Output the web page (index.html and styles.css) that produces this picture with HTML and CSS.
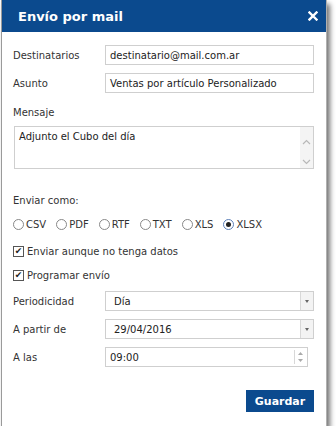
FILE: index.html
```html
<!DOCTYPE html>
<html>
<head>
  <meta charset="utf-8">
  <title>Envío por mail</title>
  <link rel="stylesheet" href="styles.css">
</head>
<body>
  <div class="dialog">
    <div class="header">
      <h2>Envío por mail</h2>
      <svg class="close" width="10" height="10" viewBox="0 0 10 10"><path d="M1.5 1.5 L8.5 8.5 M8.5 1.5 L1.5 8.5" stroke="#fff" stroke-width="2.4" stroke-linecap="square"/></svg>
    </div>
    <form class="body">
      <div class="row">
        <label class="lbl">Destinatarios</label>
        <div class="field">destinatario@mail.com.ar</div>
      </div>
      <div class="row">
        <label class="lbl">Asunto</label>
        <div class="field">Ventas por artículo Personalizado</div>
      </div>
      <label class="lbl block">Mensaje</label>
      <div class="textarea">
        <span>Adjunto el Cubo del día</span>
        <div class="scroll">
          <svg width="9" height="6" viewBox="0 0 9 6"><path d="M1 5 L4.5 1.5 L8 5" fill="none" stroke="#b8b8b8" stroke-width="1.2"/></svg>
          <svg width="9" height="6" viewBox="0 0 9 6"><path d="M1 1 L4.5 4.5 L8 1" fill="none" stroke="#b8b8b8" stroke-width="1.2"/></svg>
        </div>
      </div>
      <label class="lbl block">Enviar como:</label>
      <div class="radios">
        <span class="opt"><i class="radio"></i>CSV</span>
        <span class="opt"><i class="radio"></i>PDF</span>
        <span class="opt"><i class="radio"></i>RTF</span>
        <span class="opt"><i class="radio"></i>TXT</span>
        <span class="opt"><i class="radio"></i>XLS</span>
        <span class="opt"><i class="radio on"></i>XLSX</span>
      </div>
      <div class="check"><i class="box">&#10004;</i>Enviar aunque no tenga datos</div>
      <div class="check last"><i class="box">&#10004;</i>Programar envío</div>
      <div class="row">
        <label class="lbl">Periodicidad</label>
        <div class="field select">Día<span class="arrow"></span></div>
      </div>
      <div class="row">
        <label class="lbl">A partir de</label>
        <div class="field select">29/04/2016<span class="arrow"></span></div>
      </div>
      <div class="row">
        <label class="lbl">A las</label>
        <div class="field spin">09:00
          <span class="spinner">
            <svg width="5" height="3" viewBox="0 0 5 3"><path d="M0 3 L2.5 0 L5 3Z" fill="#aaa"/></svg>
            <svg width="5" height="3" viewBox="0 0 5 3"><path d="M0 0 L2.5 3 L5 0Z" fill="#aaa"/></svg>
          </span>
        </div>
      </div>
      <div class="actions">
        <button type="button">Guardar</button>
      </div>
    </form>
  </div>
</body>
</html>
```
FILE: styles.css
```css
body { margin: 0; background: #fff; font-family: "DejaVu Sans", Verdana, sans-serif; font-size: 10px; color: #333; }
.dialog {
  width: 324px;
  margin-left: 1px;
  border-left: 1px solid #9a9a9a;
  border-right: 1px solid #b0b0b0;
  background: #fff;
  box-shadow: 3px 4px 5px rgba(0,0,0,0.55);
}
.header {
  background: #0b4a8e;
  height: 32px;
  display: flex;
  align-items: center;
  justify-content: space-between;
  padding: 0 8px 0 16px;
}
.header h2 { margin: 0; color: #fff; font-size: 13px; font-weight: bold; }
.body { padding: 13px 12px 14px 11px; }
.row { display: flex; align-items: center; height: 20px; margin-bottom: 8px; }
.lbl { width: 92px; flex: none; }
.block { display: block; margin: 14px 0 8px 0; }
.field {
  flex: 1;
  height: 18px;
  border: 1px solid #cfcfcf;
  display: flex;
  align-items: center;
  padding-left: 4px;
  color: #222;
  position: relative;
}
.select { padding-left: 8px; }
.arrow {
  position: absolute;
  right: 0;
  top: 0;
  bottom: 0;
  width: 12px;
  border-left: 1px solid #d8d8d8;
  background: #f3f3f3;
}
.arrow::after {
  content: "";
  position: absolute;
  left: 4px;
  top: 8px;
  border-left: 2px solid transparent;
  border-right: 2px solid transparent;
  border-top: 3px solid #666;
}
.spin { flex: none; width: 197px; }
.spinner {
  position: absolute;
  right: 2px;
  top: 2px;
  bottom: 2px;
  width: 10px;
  border-left: 1px solid #d8d8d8;
  display: flex;
  flex-direction: column;
  justify-content: space-around;
  align-items: center;
}
.textarea {
  height: 41px;
  border: 1px solid #cfcfcf;
  display: flex;
  justify-content: space-between;
  padding-left: 4px;
  color: #222;
  margin: 0 0 26px 1px;
}
.textarea span { margin-top: 4px; }
.scroll {
  width: 13px;
  background: #f4f4f4;
  display: flex;
  flex-direction: column;
  justify-content: flex-end;
  gap: 14px;
  padding-bottom: 3px;
  align-items: center;
}
.radios { display: flex; margin: 13px 0 16px 0; }
.opt { display: flex; align-items: center; margin-right: 10px; }
.radio {
  width: 9px; height: 9px;
  border: 1px solid #888;
  border-radius: 50%;
  margin-right: 2px;
  position: relative;
}
.radio.on { border-color: #5b7fb8; }
.radio.on::after {
  content: "";
  position: absolute;
  left: 2px; top: 2px;
  width: 5px; height: 5px;
  border-radius: 50%;
  background: #222;
}
.check { display: flex; align-items: center; margin-bottom: 13px; }
.check.last { margin-bottom: 10px; }
.box {
  width: 9px; height: 9px;
  border: 1px solid #555;
  font-style: normal;
  font-size: 9px;
  line-height: 9px;
  text-align: center;
  margin-right: 3px;
  color: #222;
}
.actions { display: flex; justify-content: flex-end; margin-top: 23px; }
button {
  background: #0b4a8e;
  color: #fff;
  border: none;
  font-family: inherit;
  font-weight: bold;
  font-size: 11px;
  width: 68px;
  height: 22px;
}
```
